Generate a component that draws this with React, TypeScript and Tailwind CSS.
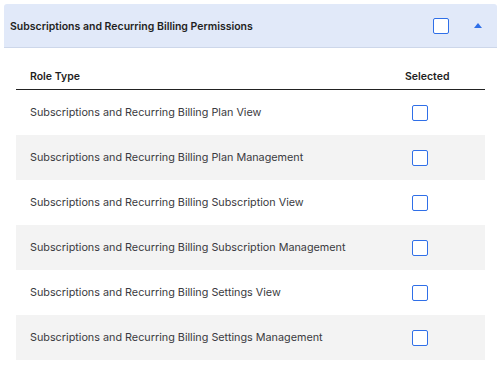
import React from 'react';

const roles = [
  'Subscriptions and Recurring Billing Plan View',
  'Subscriptions and Recurring Billing Plan Management',
  'Subscriptions and Recurring Billing Subscription View',
  'Subscriptions and Recurring Billing Subscription Management',
  'Subscriptions and Recurring Billing Settings View',
  'Subscriptions and Recurring Billing Settings Management',
];

function Checkbox() {
  return <span className="block w-4 h-4 rounded-[2px] border border-[#2f6fe8] bg-white" />;
}

export default function App() {
  return (
    <div className="w-[502px] h-[366px] bg-white pt-1 px-1 font-['Inter',sans-serif] text-[#1f1f23]">
      <div className="flex items-center h-11 w-[493px] rounded-t-[3px] bg-[#e1e9f9] border-b border-[#cdd7ea] pl-[6px]">
        <h2 className="flex-1 pt-[3px] text-[10.5px] font-semibold">Subscriptions and Recurring Billing Permissions</h2>
        <div className="w-4 mr-[25px]">
          <Checkbox />
        </div>
        <svg width="8" height="5" viewBox="0 0 8 5" className="mr-[15px]">
          <path d="M4 0 L8 5 L0 5 Z" fill="#2f6fe8" />
        </svg>
      </div>

      <div className="ml-3 w-[469px]">
        <div className="flex items-end h-[42px] pb-[5px] border-b border-[#222] text-[10.5px] font-semibold leading-[14px]">
          <div className="flex-1 pl-[14px]">Role Type</div>
          <div className="w-[80px]">Selected</div>
        </div>
        {roles.map((r, i) => (
          <div
            key={r}
            className={`flex items-center h-[45px] text-[10.8px] text-[#3a3a40] ${i % 2 === 1 ? 'bg-[#f3f3f3]' : 'bg-white'}`}
          >
            <div className="flex-1 pl-[14px] pt-[2px]">{r}</div>
            <div className="w-[73px] pt-[1px]">
              <Checkbox />
            </div>
          </div>
        ))}
      </div>
    </div>
  );
}
